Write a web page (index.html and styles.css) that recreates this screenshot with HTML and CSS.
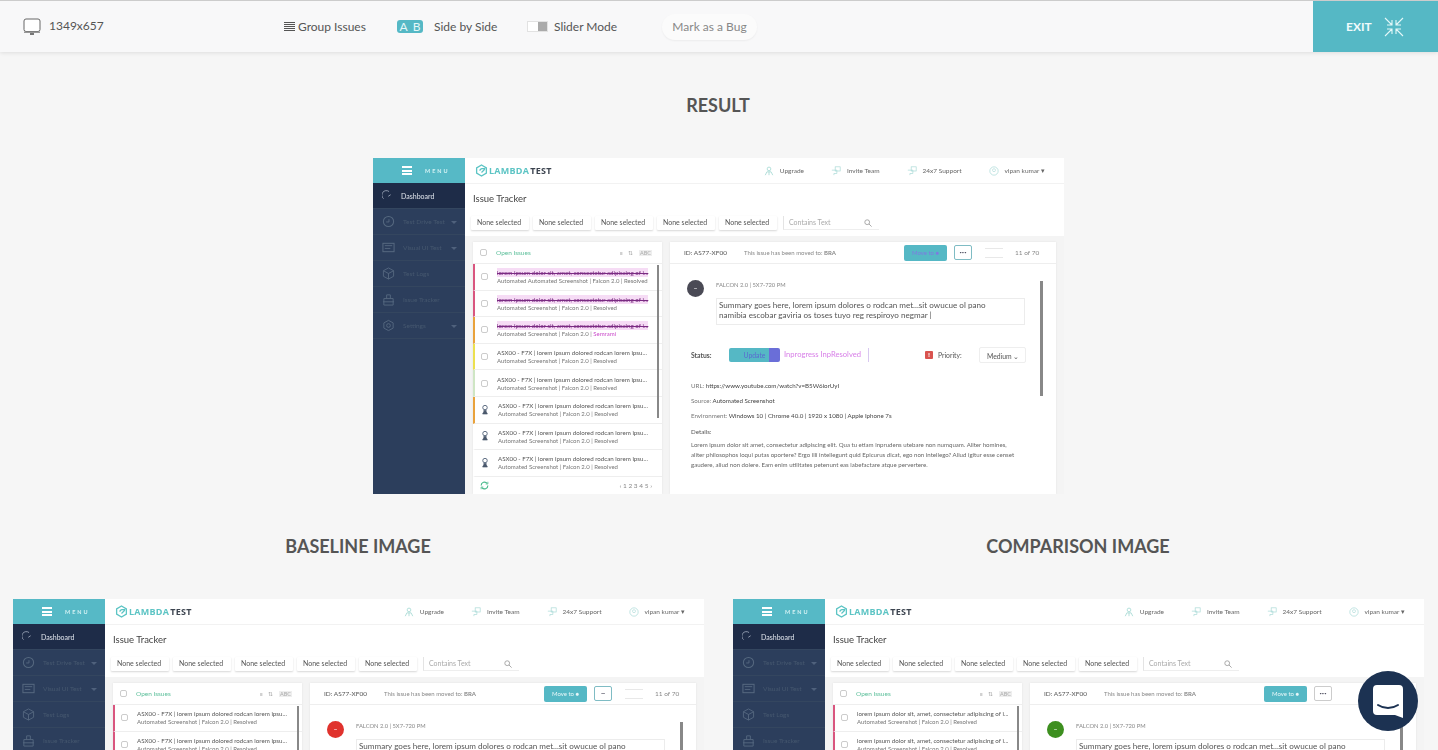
FILE: index.html
```html
<!DOCTYPE html>
<html lang="en">
<head>
    <meta charset="UTF-8">
    <meta name="viewport" content="width=device-width, initial-scale=1.0">
    <title>Compare Screenshots</title>
    <link rel="stylesheet" href="styles.css">
</head>
<body>
    <svg class="defs" width="0" height="0">
        <symbol id="i-logo" viewBox="0 0 20 20">
            <path d="M10 1.5 17.5 6v8L10 18.5 2.5 14V6z" fill="none" stroke="#5cc4c4" stroke-width="2"/>
            <path d="M10 7h6M10 7l-3 3M10 13l5-5" fill="none" stroke="#5cc4c4" stroke-width="2"/>
        </symbol>
        <symbol id="i-person" viewBox="0 0 12 12">
            <circle cx="6" cy="3.5" r="2.2" fill="none" stroke="#8fd0c8" stroke-width=".8"/>
            <path d="M1.5 11 3.5 7h5l2 4M6 7v4" fill="none" stroke="#8fd0c8" stroke-width=".8"/>
        </symbol>
        <symbol id="i-card" viewBox="0 0 12 12">
            <rect x="5" y="1" width="6" height="5" fill="none" stroke="#a5d8d4" stroke-width=".8"/>
            <path d="M1 5h6v4H3.5v2" fill="none" stroke="#a5d8d4" stroke-width=".8"/>
        </symbol>
        <symbol id="i-round" viewBox="0 0 12 12">
            <circle cx="6" cy="6" r="5" fill="none" stroke="#a5d8d4" stroke-width=".8"/>
            <circle cx="6" cy="5" r="1.8" fill="none" stroke="#a5d8d4" stroke-width=".7"/>
        </symbol>
        <symbol id="i-gauge" viewBox="0 0 14 14">
            <path d="M2 11A5.5 5.5 0 0 1 9 2M8 8l3-2" fill="none" stroke="#aab4c4" stroke-width="1"/>
        </symbol>
        <symbol id="i-clock" viewBox="0 0 14 14">
            <circle cx="7" cy="7" r="5.5" fill="none" stroke="#55687f" stroke-width="1.1"/>
            <path d="M4.5 7.5h3V4.5" fill="none" stroke="#55687f" stroke-width="1"/>
        </symbol>
        <symbol id="i-screen" viewBox="0 0 14 14">
            <rect x="1" y="2.5" width="12" height="9" fill="none" stroke="#55687f" stroke-width="1.1"/>
            <path d="M3 5h8M3 8h6" stroke="#55687f" stroke-width="1"/>
        </symbol>
        <symbol id="i-cube" viewBox="0 0 14 14">
            <path d="M7 1 12.5 4v6L7 13 1.5 10V4zM7 7v6M1.5 4 7 7l5.5-3" fill="none" stroke="#55687f" stroke-width="1"/>
        </symbol>
        <symbol id="i-bag" viewBox="0 0 14 14">
            <path d="M2 6h10v7H2zM5 6V2h4v4M1 9.5h12" fill="none" stroke="#55687f" stroke-width="1"/>
        </symbol>
        <symbol id="i-cog" viewBox="0 0 14 14">
            <path d="M7 1.5 12 4.2v5.6L7 12.5 2 9.8V4.2z" fill="none" stroke="#55687f" stroke-width="1"/>
            <circle cx="7" cy="7" r="2" fill="none" stroke="#55687f" stroke-width="1"/>
        </symbol>
        <symbol id="i-trophy" viewBox="0 0 10 12">
            <circle cx="5" cy="3" r="2.8" fill="none" stroke="#5a6a80" stroke-width="1.2"/>
            <path d="M2 11h6L5 5.5zM2.5 6.5l5 4M7.5 6.5l-5 4" fill="#4a586c" stroke="#4a586c" stroke-width=".8"/>
        </symbol>
        <symbol id="i-refresh" viewBox="0 0 12 12">
            <path d="M1.5 6a4.5 4.5 0 0 1 8-2.8M10.5 6a4.5 4.5 0 0 1-8 2.8" fill="none" stroke="#46b98a" stroke-width="1.5"/>
            <path d="M10.5 1v3h-3M1.5 11V8h3" fill="none" stroke="#46b98a" stroke-width="1"/>
        </symbol>
    </svg>

    <div class="page">
        <header class="topbar">
            <div class="resolution">
                <svg class="monitor" width="18" height="18" viewBox="0 0 18 18">
                    <rect x="1" y="1" width="16" height="12.5" rx="2" fill="#fff" stroke="#666" stroke-width="1"/>
                    <path d="M1 13.5h16v1.5H1z" fill="#999"/>
                    <path d="M7 15h4v2H7z" fill="#777"/>
                </svg>
                <span>1349x657</span>
            </div>
            <div class="tool tool-group">
                <svg width="11" height="10" viewBox="0 0 11 10">
                    <path d="M0 .5h11M0 2.5h11M0 4.5h11M0 6.5h11M0 8.5h11" stroke="#555" stroke-width="1.2"/>
                </svg>
                <span>Group Issues</span>
            </div>
            <div class="tool tool-side">
                <span class="ab"><b>A</b><b>B</b></span>
                <span>Side by Side</span>
            </div>
            <div class="tool tool-slider">
                <span class="switch"><i></i></span>
                <span>Slider Mode</span>
            </div>
            <div class="bug">Mark as a Bug</div>
            <a class="exit">
                <span>EXIT</span>
                <svg width="20" height="20" viewBox="0 0 20 20">
                    <path d="M1 1l7 7M8 3v5H3M19 1l-7 7M12 3v5h5M1 19l7-7M8 17v-5H3M19 19l-7-7M12 17v-5h5" fill="none" stroke="#e4f7f8" stroke-width="1.1"/>
                </svg>
            </a>
        </header>

        <section class="result">
            <h2>RESULT</h2>
            <div class="shot">
                <aside class="side">
                    <div class="side-menu"><span class="burger"></span><span>MENU</span></div>
                    <div class="side-item current"><svg width="11" height="11"><use href="#i-gauge"/></svg><span>Dashboard</span></div>
                    <div class="side-item caret"><svg width="13" height="13"><use href="#i-clock"/></svg><span>Test Drive Test</span></div>
                    <div class="side-item caret"><svg width="13" height="13"><use href="#i-screen"/></svg><span>Visual UI Test</span></div>
                    <div class="side-item"><svg width="13" height="13"><use href="#i-cube"/></svg><span>Test Logs</span></div>
                    <div class="side-item"><svg width="13" height="13"><use href="#i-bag"/></svg><span>Issue Tracker</span></div>
                    <div class="side-item caret"><svg width="13" height="13"><use href="#i-cog"/></svg><span>Settings</span></div>
                </aside>
                <div class="app">
                    <div class="app-nav">
                        <div class="logo"><svg width="13" height="13"><use href="#i-logo"/></svg><b>LAMBDA</b><b class="dark">TEST</b></div>
                        <div class="links">
                            <span><svg width="10" height="10"><use href="#i-person"/></svg>Upgrade</span>
                            <span><svg width="10" height="10"><use href="#i-card"/></svg>Invite Team</span>
                            <span><svg width="10" height="10"><use href="#i-card"/></svg>24x7 Support</span>
                            <span><svg width="10" height="10"><use href="#i-round"/></svg>vipan kumar ▾</span>
                        </div>
                    </div>
                    <div class="app-title">Issue Tracker</div>
                    <div class="filters">
                        <span class="select">None selected</span>
                        <span class="select">None selected</span>
                        <span class="select">None selected</span>
                        <span class="select">None selected</span>
                        <span class="select">None selected</span>
                        <span class="search">Contains Text<svg width="8" height="8" viewBox="0 0 8 8"><circle cx="3.2" cy="3.2" r="2.4" fill="none" stroke="#aaa"/><path d="M5 5l2.6 2.6" stroke="#aaa"/></svg></span>
                    </div>
                    <div class="panels">
                        <div class="list">
                            <div class="list-head"><i class="check"></i><span class="open">Open Issues</span><span class="tools">≡&nbsp;&nbsp;&nbsp;&nbsp;⇅&nbsp;&nbsp;&nbsp;&nbsp;<u>ABC</u></span></div>
                            <div class="rows">
                                <div class="row red changed"><i class="check"></i><div><p>lorem ipsum dolor sit, amet, consectetur adipiscing of i...</p><small>Automated Automated Screenshot | Falcon 2.0 | Resolved</small></div></div>
                                <div class="row red changed"><i class="check"></i><div><p>lorem ipsum dolor sit, amet, consectetur adipiscing of i...</p><small>Automated Screenshot | Falcon 2.0 | Resolved</small></div></div>
                                <div class="row orange changed"><i class="check"></i><div><p>lorem ipsum dolor sit, amet, consectetur adipiscing of i...</p><small>Automated Screenshot | Falcon 2.0 | <em>Semrami</em></small></div></div>
                                <div class="row yellow"><i class="check"></i><div><p>ASX00 - F7X | lorem ipsum dolored rodcan lorem ipsu...</p><small>Automated Screenshot | Falcon 2.0 | Resolved</small></div></div>
                                <div class="row green"><i class="check"></i><div><p>ASX00 - F7X | lorem ipsum dolored rodcan lorem ipsu...</p><small>Automated Screenshot | Falcon 2.0 | Resolved</small></div></div>
                                <div class="row orange"><svg class="trophy" width="8" height="10"><use href="#i-trophy"/></svg><div><p>ASX00 - F7X | lorem ipsum dolored rodcan lorem ipsu...</p><small>Automated Screenshot | Falcon 2.0 | Resolved</small></div></div>
                                <div class="row"><svg class="trophy" width="8" height="10"><use href="#i-trophy"/></svg><div><p>ASX00 - F7X | lorem ipsum dolored rodcan lorem ipsu...</p><small>Automated Screenshot | Falcon 2.0 | Resolved</small></div></div>
                                <div class="row"><svg class="trophy" width="8" height="10"><use href="#i-trophy"/></svg><div><p>ASX00 - F7X | lorem ipsum dolored rodcan lorem ipsu...</p><small>Automated Screenshot | Falcon 2.0 | Resolved</small></div></div>
                            </div>
                            <div class="list-foot"><svg width="9" height="9"><use href="#i-refresh"/></svg><span>‹ 1 2 3 4 5 ›</span></div>
                        </div>
                        <div class="detail">
                            <div class="detail-head">
                                <span class="issue-id">ID: AS77-XF00</span>
                                <span class="moved">This issue has been moved to: <b>BRA</b></span>
                                <span class="move diff">Move to ●</span>
                                <span class="more">•••</span>
                                <span class="blank"></span>
                                <span class="count">11 of 70</span>
                            </div>
                            <div class="detail-body">
                                <div class="author">
                                    <span class="avatar dark-dot">–</span>
                                    <div class="author-main">
                                        <div class="stamp">FALCON 2.0 | 5X7-720 PM</div>
                                        <div class="summary">Summary goes here, lorem ipsum dolores o rodcan met...sit owucue ol pano<br>namibia escobar gaviria os toses tuyo reg respiroyo negmar |</div>
                                    </div>
                                </div>
                                <div class="status-row">
                                    <b>Status:</b>
                                    <span class="status-btn">Update</span>
                                    <span class="status-text">Inprogress InpResolved</span>
                                    <span class="priority"><i>!!</i>Priority:</span>
                                    <span class="medium">Medium ⌄</span>
                                </div>
                                <p class="info">URL: <b>https://www.youtube.com/watch?v=B5W6iorUyI</b></p>
                                <p class="info">Source: <b>Automated Screenshot</b></p>
                                <p class="info">Environment: <b>Windows 10 | Chrome 40.0 | 1920 x 1080 | Apple Iphone 7s</b></p>
                                <p class="info details">Details:</p>
                                <p class="lorem">Lorem ipsum dolor sit amet, consectetur adipiscing elit. Qua tu etiam inprudens utebare non numquam. Aliter homines, aliter philosophos loqui putas oportere? Ergo illi intellegunt quid Epicurus dicat, ego non intellego? Aliud igitur esse censet gaudere, aliud non dolere. Eam enim utilitates petenunt eas labefactare atque pervertere.</p>
                                <span class="bar"></span>
                            </div>
                        </div>
                    </div>
                </div>
            </div>
        </section>

        <div class="compare">
            <section>
                <h2>BASELINE IMAGE</h2>
                <div class="shot">
                    <aside class="side">
                        <div class="side-menu"><span class="burger"></span><span>MENU</span></div>
                        <div class="side-item current"><svg width="11" height="11"><use href="#i-gauge"/></svg><span>Dashboard</span></div>
                        <div class="side-item caret"><svg width="13" height="13"><use href="#i-clock"/></svg><span>Test Drive Test</span></div>
                        <div class="side-item caret"><svg width="13" height="13"><use href="#i-screen"/></svg><span>Visual UI Test</span></div>
                        <div class="side-item"><svg width="13" height="13"><use href="#i-cube"/></svg><span>Test Logs</span></div>
                        <div class="side-item"><svg width="13" height="13"><use href="#i-bag"/></svg><span>Issue Tracker</span></div>
                    </aside>
                    <div class="app">
                        <div class="app-nav">
                            <div class="logo"><svg width="13" height="13"><use href="#i-logo"/></svg><b>LAMBDA</b><b class="dark">TEST</b></div>
                            <div class="links">
                                <span><svg width="10" height="10"><use href="#i-person"/></svg>Upgrade</span>
                                <span><svg width="10" height="10"><use href="#i-card"/></svg>Invite Team</span>
                                <span><svg width="10" height="10"><use href="#i-card"/></svg>24x7 Support</span>
                                <span><svg width="10" height="10"><use href="#i-round"/></svg>vipan kumar ▾</span>
                            </div>
                        </div>
                        <div class="app-title">Issue Tracker</div>
                        <div class="filters">
                            <span class="select">None selected</span>
                            <span class="select">None selected</span>
                            <span class="select">None selected</span>
                            <span class="select">None selected</span>
                            <span class="select">None selected</span>
                            <span class="search">Contains Text<svg width="8" height="8" viewBox="0 0 8 8"><circle cx="3.2" cy="3.2" r="2.4" fill="none" stroke="#aaa"/><path d="M5 5l2.6 2.6" stroke="#aaa"/></svg></span>
                        </div>
                        <div class="panels">
                            <div class="list">
                                <div class="list-head"><i class="check"></i><span class="open">Open Issues</span><span class="tools">≡&nbsp;&nbsp;&nbsp;&nbsp;⇅&nbsp;&nbsp;&nbsp;&nbsp;<u>ABC</u></span></div>
                                <div class="rows">
                                    <div class="row red"><i class="check"></i><div><p>ASX00 - F7X | lorem ipsum dolored rodcan lorem ipsu...</p><small>Automated Screenshot | Falcon 2.0 | Resolved</small></div></div>
                                    <div class="row red"><i class="check"></i><div><p>ASX00 - F7X | lorem ipsum dolored rodcan lorem ipsu...</p><small>Automated Screenshot | Falcon 2.0 | Resolved</small></div></div>
                                </div>
                            </div>
                            <div class="detail">
                                <div class="detail-head">
                                    <span class="issue-id">ID: AS77-XF00</span>
                                    <span class="moved">This issue has been moved to: <b>BRA</b></span>
                                    <span class="move">Move to ●</span>
                                    <span class="more dash">–</span>
                                    <span class="blank"></span>
                                    <span class="count">11 of 70</span>
                                </div>
                                <div class="detail-body">
                                    <div class="author">
                                        <span class="avatar red-dot">–</span>
                                        <div class="author-main">
                                            <div class="stamp">FALCON 2.0 | 5X7-720 PM</div>
                                            <div class="summary">Summary goes here, lorem ipsum dolores o rodcan met...sit owucue ol pano<br>namibia escobar gaviria os toses tuyo reg respiroyo negmar |</div>
                                        </div>
                                    </div>
                                    <span class="bar"></span>
                                </div>
                            </div>
                        </div>
                    </div>
                </div>
            </section>
            <section>
                <h2>COMPARISON IMAGE</h2>
                <div class="shot">
                    <aside class="side">
                        <div class="side-menu"><span class="burger"></span><span>MENU</span></div>
                        <div class="side-item current"><svg width="11" height="11"><use href="#i-gauge"/></svg><span>Dashboard</span></div>
                        <div class="side-item caret"><svg width="13" height="13"><use href="#i-clock"/></svg><span>Test Drive Test</span></div>
                        <div class="side-item caret"><svg width="13" height="13"><use href="#i-screen"/></svg><span>Visual UI Test</span></div>
                        <div class="side-item"><svg width="13" height="13"><use href="#i-cube"/></svg><span>Test Logs</span></div>
                        <div class="side-item"><svg width="13" height="13"><use href="#i-bag"/></svg><span>Issue Tracker</span></div>
                    </aside>
                    <div class="app">
                        <div class="app-nav">
                            <div class="logo"><svg width="13" height="13"><use href="#i-logo"/></svg><b>LAMBDA</b><b class="dark">TEST</b></div>
                            <div class="links">
                                <span><svg width="10" height="10"><use href="#i-person"/></svg>Upgrade</span>
                                <span><svg width="10" height="10"><use href="#i-card"/></svg>Invite Team</span>
                                <span><svg width="10" height="10"><use href="#i-card"/></svg>24x7 Support</span>
                                <span><svg width="10" height="10"><use href="#i-round"/></svg>vipan kumar ▾</span>
                            </div>
                        </div>
                        <div class="app-title">Issue Tracker</div>
                        <div class="filters">
                            <span class="select">None selected</span>
                            <span class="select">None selected</span>
                            <span class="select">None selected</span>
                            <span class="select">None selected</span>
                            <span class="select">None selected</span>
                            <span class="search">Contains Text<svg width="8" height="8" viewBox="0 0 8 8"><circle cx="3.2" cy="3.2" r="2.4" fill="none" stroke="#aaa"/><path d="M5 5l2.6 2.6" stroke="#aaa"/></svg></span>
                        </div>
                        <div class="panels">
                            <div class="list">
                                <div class="list-head"><i class="check"></i><span class="open">Open Issues</span><span class="tools">≡&nbsp;&nbsp;&nbsp;&nbsp;⇅&nbsp;&nbsp;&nbsp;&nbsp;<u>ABC</u></span></div>
                                <div class="rows">
                                    <div class="row red"><i class="check"></i><div><p>lorem ipsum dolor sit, amet, consectetur adipiscing of i...</p><small>Automated Screenshot | Falcon 2.0 | Resolved</small></div></div>
                                    <div class="row red"><i class="check"></i><div><p>lorem ipsum dolor sit, amet, consectetur adipiscing of i...</p><small>Automated Screenshot | Falcon 2.0 | Resolved</small></div></div>
                                </div>
                            </div>
                            <div class="detail">
                                <div class="detail-head">
                                    <span class="issue-id">ID: AS77-XF00</span>
                                    <span class="moved">This issue has been moved to: <b>BRA</b></span>
                                    <span class="move">Move to ●</span>
                                    <span class="more gray">•••</span>
                                </div>
                                <div class="detail-body">
                                    <div class="author">
                                        <span class="avatar green-dot">–</span>
                                        <div class="author-main">
                                            <div class="stamp">FALCON 2.0 | 5X7-720 PM</div>
                                            <div class="summary">Summary goes here, lorem ipsum dolores o rodcan met...sit owucue ol pano<br>namibia escobar gaviria os toses tuyo reg respiroyo negmar |</div>
                                        </div>
                                    </div>
                                    <span class="bar"></span>
                                </div>
                            </div>
                        </div>
                    </div>
                </div>
            </section>
        </div>
    </div>

    <a class="chat">
        <svg width="30" height="33" viewBox="0 0 30 33">
            <path d="M4 0h22a4 4 0 0 1 4 4v29l-8-3H4a4 4 0 0 1-4-4V4a4 4 0 0 1 4-4z" fill="#fff"/>
            <path d="M5 20c6 4 14 4 20 0" fill="none" stroke="#1c3252" stroke-width="2" stroke-linecap="round"/>
        </svg>
    </a>
</body>
</html>
```

FILE: styles.css
```css
* {
    box-sizing: border-box;
}
html, body {
    margin: 0;
    padding: 0;
}
body {
    font-family: Lato, "Open Sans", sans-serif;
    background-color: #f6f6f6;
    color: #555;
}
.defs {
    position: absolute;
}
.page {
    height: 100vh;
    overflow: hidden;
}

/* top bar */
.topbar {
    height: 52px;
    display: flex;
    align-items: center;
    border-top: 1px solid #ccc;
    background-color: #f8f8f9;
    box-shadow: 0 1px 4px rgba(0, 0, 0, 0.1);
    font-size: 12px;
    color: #555;
    padding-left: 23px;
    position: relative;
}
.resolution {
    display: flex;
    align-items: center;
    gap: 8px;
    width: 261px;
    margin-top: -2px;
}
.monitor {
    margin-top: 2px;
}
.tool {
    display: flex;
    align-items: center;
}
.tool-group {
    gap: 3px;
    width: 113px;
}
.tool-side {
    gap: 11px;
    width: 130px;
}
.tool-slider {
    gap: 6px;
    width: 135px;
}
.ab {
    width: 26px;
    height: 13px;
    display: flex;
    justify-content: space-around;
    align-items: center;
    background-color: #55b8c5;
    border-radius: 3px;
    color: #e4f7f8;
    font-size: 12px;
}
.ab b {
    font-weight: 400;
}
.switch {
    width: 21px;
    height: 11px;
    background-color: #fff;
    border: 1px solid #e2e2e2;
    display: flex;
    justify-content: flex-end;
}
.switch i {
    width: 9px;
    background-color: #aaa;
}
.bug {
    width: 95px;
    height: 26px;
    line-height: 26px;
    text-align: center;
    background-color: #fbfbfb;
    border-radius: 13px;
    box-shadow: 0 1px 2px rgba(0, 0, 0, 0.05);
    color: #888;
}
.exit {
    margin-left: auto;
    width: 125px;
    height: 51px;
    background-color: #55b8c5;
    color: #f0fbfc;
    font-weight: 700;
    display: flex;
    align-items: center;
    gap: 12px;
    padding-left: 33px;
}

/* sections */
h2 {
    margin: 0 0 42px;
    font-size: 18px;
    line-height: 22px;
    font-weight: 700;
    color: #555;
    text-align: center;
}
.result {
    padding-top: 42px;
}
.result h2 {
    padding-right: 2px;
}
.result .shot {
    margin-left: 373px;
}
.compare {
    display: grid;
    grid-template-columns: 716px 724px;
    margin-top: 41px;
}
.compare section:first-child .shot {
    margin-left: 13px;
}
.compare section:last-child .shot {
    margin-left: 17px;
}

/* fake screenshot */
.shot {
    width: 691px;
    height: 336px;
    display: grid;
    grid-template-columns: 92px 1fr;
    overflow: hidden;
    background-color: #f4f4f4;
    filter: blur(0.5px);
}
.side {
    background-color: #2c3e5c;
}
.side-menu {
    height: 25px;
    background-color: #56b9c6;
    color: #d5f2f4;
    font-size: 5.5px;
    font-weight: 700;
    letter-spacing: 2px;
    display: flex;
    align-items: center;
    gap: 13px;
    padding-left: 29px;
}
.burger {
    width: 10px;
    height: 9px;
    border-top: 2px solid #fff;
    border-bottom: 2px solid #fff;
    position: relative;
}
.burger::after {
    content: "";
    position: absolute;
    left: 0;
    right: 0;
    top: 1.5px;
    height: 2px;
    background-color: #fff;
}
.side-item {
    height: 26px;
    display: flex;
    align-items: center;
    gap: 8px;
    padding-left: 9px;
    font-size: 6.5px;
    color: #46586f;
    border-bottom: 1px solid #34465f;
    position: relative;
}
.side-item.current {
    background-color: #1e2c48;
    color: #dfe4ec;
    font-size: 7px;
}
.side-item.caret::after {
    content: "";
    position: absolute;
    right: 8px;
    top: 12px;
    border-left: 3px solid transparent;
    border-right: 3px solid transparent;
    border-top: 3px solid #4f617c;
}

.app {
    display: flex;
    flex-direction: column;
    min-width: 0;
}
.app-nav {
    height: 26px;
    background-color: #fff;
    border-bottom: 1px solid #f2f2f2;
    display: flex;
    align-items: center;
    justify-content: space-between;
    padding: 0 19px 0 10px;
}
.logo {
    display: flex;
    align-items: center;
    gap: 1px;
    font-family: "Open Sans", sans-serif;
    font-size: 9px;
    color: #5cc4c4;
    letter-spacing: 0.25px;
}
.logo .dark {
    color: #3d4550;
}
.links {
    display: flex;
    gap: 27px;
    font-size: 6.5px;
    color: #666;
}
.links span {
    display: flex;
    align-items: center;
    gap: 6px;
}
.app-title {
    background-color: #fff;
    padding: 9px 0 0 8px;
    height: 32px;
    font-size: 9.5px;
    color: #444;
}
.filters {
    background-color: #fff;
    height: 20px;
    padding: 0 6px;
    display: flex;
    gap: 4px;
    align-items: flex-start;
}
.select {
    width: 58px;
    height: 14px;
    line-height: 13px;
    font-size: 7px;
    color: #555;
    padding-left: 6px;
    background-color: #fff;
    box-shadow: 0 1px 2px rgba(0, 0, 0, 0.16);
    border-radius: 1px;
}
.search {
    width: 96px;
    height: 14px;
    margin-left: 2px;
    line-height: 13px;
    font-size: 7px;
    color: #aaa;
    padding: 0 7px 0 5px;
    border-left: 1px solid #e4e4e4;
    border-bottom: 1px solid #eee;
    display: flex;
    align-items: center;
    justify-content: space-between;
}
.panels {
    flex: 1;
    display: grid;
    grid-template-columns: 189px 386px;
    gap: 8px;
    padding: 6px 0 0 8px;
    min-height: 0;
}
.list, .detail {
    background-color: #fff;
    box-shadow: 0 0 2px rgba(0, 0, 0, 0.08);
    display: flex;
    flex-direction: column;
    min-height: 0;
}
.list-head {
    height: 22px;
    display: flex;
    align-items: center;
    padding-left: 7px;
    border-bottom: 1px solid #eee;
    font-size: 6.5px;
}
.open {
    color: #5cbf9a;
    margin-left: 9px;
}
.tools {
    margin-left: auto;
    padding-right: 10px;
    color: #aaa;
    font-size: 5.5px;
}
.tools u {
    text-decoration: none;
    background-color: #eee;
    padding: 0 1px;
}
.check {
    width: 7px;
    height: 7px;
    flex: none;
    border: 1px solid #ccc;
    border-radius: 2px;
}
.rows {
    position: relative;
    flex: none;
}
.rows::after {
    content: "";
    position: absolute;
    right: 3px;
    top: 1px;
    width: 2px;
    height: 153px;
    background-color: #888;
}
.row {
    height: 26.6px;
    display: flex;
    align-items: center;
    gap: 9px;
    padding-left: 6px;
    border-bottom: 1px solid #eee;
    border-left: 2px solid transparent;
}
.row.red {
    border-left-color: #d9567f;
}
.row.orange {
    border-left-color: #e9a23b;
}
.row.yellow {
    border-left-color: #ece04f;
}
.row.green {
    border-left-color: #cfe6c4;
}
.row p {
    margin: 0;
    font-size: 6.2px;
    line-height: 9px;
    color: #555;
    white-space: nowrap;
}
.row small {
    display: block;
    font-size: 6px;
    line-height: 8px;
    color: #777;
    white-space: nowrap;
}
.row.changed p {
    color: #7a2a82;
    background-color: #f6dcf5;
    text-decoration: line-through;
}
.row.changed small em {
    font-style: normal;
    color: #c94ac9;
}
.trophy {
    flex: none;
}
.list-foot {
    flex: 1;
    display: flex;
    align-items: center;
    justify-content: space-between;
    padding: 0 10px 0 7px;
    font-size: 6.5px;
    color: #888;
}
.detail-head {
    height: 22px;
    flex: none;
    display: flex;
    align-items: center;
    border-bottom: 1px solid #eee;
    padding-left: 14px;
    font-size: 6.5px;
    color: #888;
}
.issue-id {
    color: #555;
    width: 60px;
}
.moved {
    width: 160px;
    font-size: 6px;
}
.move {
    width: 43px;
    height: 16px;
    line-height: 16px;
    text-align: center;
    background-color: #55b8c5;
    border-radius: 2px;
    color: #e6f6f8;
    font-size: 6px;
}
.move.diff {
    color: #7f7ae0;
}
.more {
    width: 18px;
    height: 15px;
    margin-left: 7px;
    line-height: 14px;
    text-align: center;
    border: 1px solid #7fbcc4;
    border-radius: 2px;
    color: #556;
    font-size: 4px;
}
.more.dash {
    font-size: 9px;
    line-height: 11px;
}
.more.gray {
    border-color: #ccc;
}
.blank {
    width: 18px;
    height: 10px;
    margin-left: 13px;
    border-top: 1px solid #e8e8e8;
    border-bottom: 1px solid #e8e8e8;
}
.count {
    margin-left: 12px;
}
.detail-body {
    position: relative;
    flex: 1;
    padding: 16px 30px 0 21px;
    min-height: 0;
}
.bar {
    position: absolute;
    left: 370px;
    top: 17px;
    width: 3px;
    height: 115px;
    background-color: #888;
}
.author {
    display: flex;
    gap: 11px;
}
.avatar {
    width: 17px;
    height: 17px;
    margin: 0 0 0 -4px;
    flex: none;
    border-radius: 50%;
    text-align: center;
    line-height: 16px;
    font-size: 7px;
    color: #fff;
}
.dark-dot {
    background-color: #4a4a55;
}
.red-dot {
    background-color: #e0322d;
}
.green-dot {
    background-color: #3d8f1f;
}
.author-main {
    flex: 1;
    margin-left: 1px;
}
.stamp {
    font-size: 5.8px;
    line-height: 10px;
    color: #888;
}
.summary {
    margin-top: 8px;
    width: 309px;
    height: 27px;
    padding: 1px 2px;
    border: 1px solid #ececec;
    font-size: 8.1px;
    line-height: 10px;
    color: #555;
    white-space: nowrap;
}
.status-row {
    display: flex;
    align-items: center;
    height: 16px;
    margin-top: 22px;
    font-size: 6.8px;
    color: #555;
}
.status-row > b {
    width: 38px;
    font-weight: 700;
}
.status-btn {
    width: 51px;
    height: 14px;
    line-height: 14px;
    text-align: center;
    color: #5a6ad0;
    background: linear-gradient(to right, #55b8c5 0, #55b8c5 78%, #6a6ed8 78%);
    border-radius: 2px;
}
.status-text {
    width: 86px;
    height: 14px;
    line-height: 13px;
    margin-left: 3px;
    padding-left: 1px;
    font-size: 7.6px;
    color: #d880e8;
    white-space: nowrap;
    border-right: 1px solid #d8c8f0;
}
.priority {
    display: flex;
    align-items: center;
    gap: 5px;
    margin-left: 56px;
    width: 54px;
}
.priority i {
    width: 8px;
    height: 8px;
    background-color: #d9534f;
    border-radius: 1px;
    color: #fff;
    font-size: 5px;
    line-height: 8px;
    text-align: center;
    font-style: normal;
}
.medium {
    width: 47px;
    height: 16px;
    line-height: 16px;
    padding-left: 7px;
    border: 1px solid #eee;
    border-radius: 2px;
}
.info {
    margin: 0;
    font-size: 6.2px;
    line-height: 15.2px;
    color: #777;
}
.status-row + .info {
    margin-top: 15px;
}
.info b {
    color: #444;
    font-weight: 400;
}
.info.details {
    color: #555;
}
.lorem {
    margin: 1px 0 0;
    width: 330px;
    font-size: 6.1px;
    line-height: 10px;
    color: #666;
}

/* chat bubble */
.chat {
    position: fixed;
    left: 1358px;
    top: 671px;
    width: 60px;
    height: 60px;
    border-radius: 50%;
    background-color: #1c3252;
    display: flex;
    align-items: center;
    justify-content: center;
}
```
